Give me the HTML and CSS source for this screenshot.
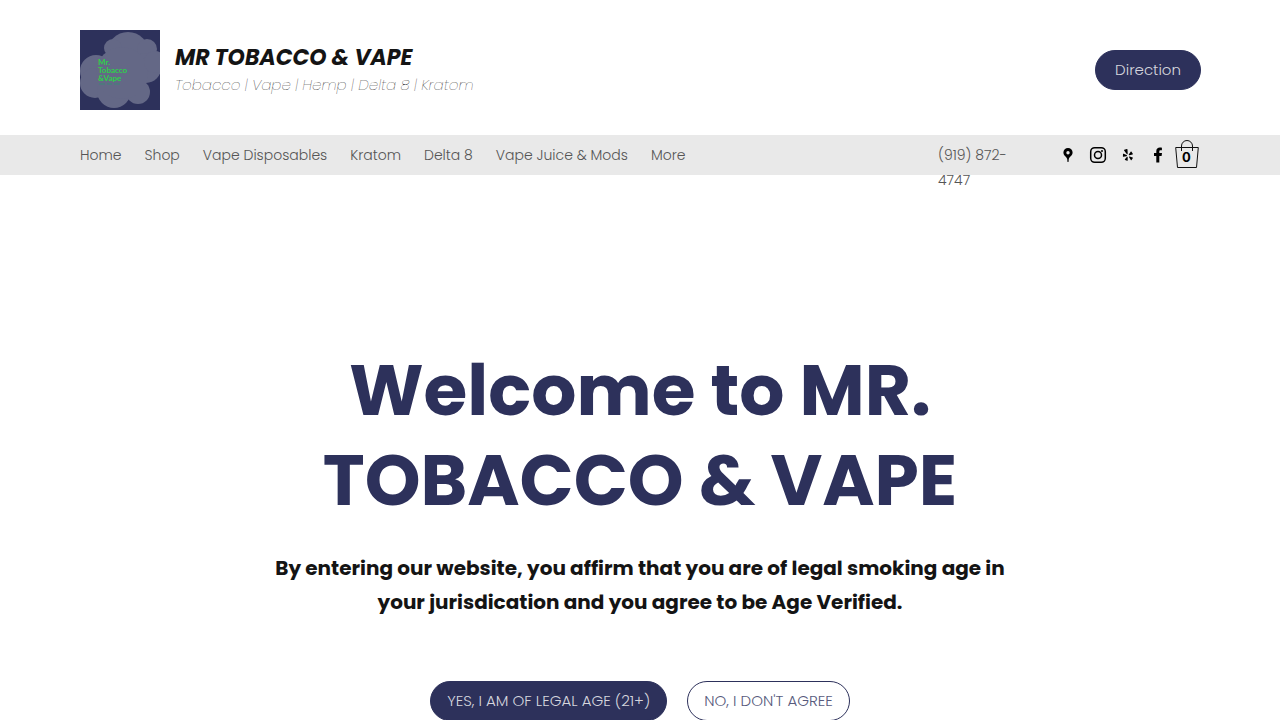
FILE: index.html
```html
<!DOCTYPE html>
<html lang="en">
<head>
<meta charset="utf-8">
<meta name="viewport" content="width=device-width, initial-scale=1">
<title>MR TOBACCO &amp; VAPE</title>
<link rel="stylesheet" href="styles.css">
</head>
<body>
<header class="header">
  <a class="logo" href="#" aria-label="Mr. Tobacco &amp; Vape home">
    <svg width="80" height="80" viewBox="0 0 80 80">
      <rect width="80" height="80" fill="#2d315b"/>
      <g fill="#646886">
        <circle cx="48" cy="23" r="21"/>
        <circle cx="33" cy="18" r="9"/>
        <circle cx="67" cy="19" r="10"/>
        <circle cx="16" cy="41" r="16"/>
        <circle cx="15" cy="53" r="15"/>
        <circle cx="34" cy="61" r="17"/>
        <circle cx="58" cy="62" r="12"/>
        <circle cx="66" cy="38" r="15"/>
        <circle cx="42" cy="43" r="26"/>
        <circle cx="75" cy="32" r="11"/>
      </g>
      <g class="logo-text">
        <text x="18" y="35">Mr.</text>
        <text x="18" y="43">Tobacco</text>
        <text x="18" y="51">&amp;Vape</text>
      </g>
      <path d="M19 54h6M27 54h5M34 54h6" stroke="#3d8576" stroke-width="1"/>
    </svg>
  </a>
  <div class="brand">
    <a class="brand-name" href="#">MR TOBACCO &amp; VAPE</a>
    <p class="tagline">Tobacco | Vape | Hemp | Delta 8 | Kratom</p>
  </div>
  <button class="button button-solid" type="button">Direction</button>
</header>
<div class="bar">
  <nav class="menu" aria-label="Site">
    <a href="#">Home</a>
    <a href="#">Shop</a>
    <a href="#">Vape Disposables</a>
    <a href="#">Kratom</a>
    <a href="#">Delta 8</a>
    <a href="#">Vape Juice &amp; Mods</a>
    <a href="#">More</a>
  </nav>
  <a class="phone" href="tel:9198724747">(919) 872-4747</a>
  <div class="social">
    <a href="#" aria-label="Google Places">
      <svg width="20" height="20" viewBox="0 0 20 20"><path fill-rule="evenodd" d="M10 3a4.600 4.600 0 0 0-4.600 4.600c0 2.900 2.900 4 3.800 6.400L9.500 17h1l.3-3c.9-2.400 3.800-3.500 3.800-6.400A4.600 4.600 0 0 0 10 3zm0 3a1.700 1.700 0 1 1 0 3.400A1.700 1.700 0 0 1 10 6z"/></svg>
    </a>
    <a href="#" aria-label="Instagram">
      <svg width="20" height="20" viewBox="0 0 20 20" fill="none" stroke="#000" stroke-width="1.500"><rect x="2.700" y="2.700" width="14.600" height="14.600" rx="4"/><circle cx="10" cy="10" r="3.500"/><circle cx="14" cy="6" r="1" fill="#000" stroke="none"/></svg>
    </a>
    <a href="#" aria-label="Yelp">
      <svg width="20" height="20" viewBox="0 0 20 20"><path d="M6.300 4.800 8.800 4c.4-.1.700.1.700.5l.2 4.200c0 .7-.7.900-1 .3L6.100 5.500c-.2-.3-.1-.6.2-.7zM5.600 8.800l3 1.300c.6.300.5 1-.1 1.100l-3 .6c-.3.100-.6-.1-.6-.4l.1-2.300c0-.3.300-.4.600-.3zM9.700 12.200v3.200c0 .3-.3.500-.6.400l-2-.8c-.4-.1-.4-.5-.2-.8l1.900-2.300c.4-.4.900-.2.900.3zM11.700 11.500l2.900.9c.3.100.4.400.3.700l-1.300 1.800c-.2.300-.6.300-.8 0l-1.700-2.600c-.3-.5.100-1 .6-.8zM10.900 9.300l1.800-2.500c.2-.3.500-.3.800 0l1.300 1.900c.1.300 0 .6-.3.700l-3 .8c-.6.100-1-.4-.6-.9z"/></svg>
    </a>
    <a href="#" aria-label="Facebook">
      <svg width="20" height="20" viewBox="0 0 20 20"><path d="M8.300 17.500v-6.600H6V8.100h2.300V6.300c0-2.400 1.400-3.700 3.600-3.700.9 0 1.700.1 2 .1v2.600h-1.200c-1.100 0-1.400.5-1.400 1.300v1.500h2.700l-.4 2.800h-2.300v6.600z"/></svg>
    </a>
  </div>
  <button class="cart" type="button" aria-label="Cart with 0 items">
    <svg width="24" height="30" viewBox="0 0 24 30"><g fill="none" stroke="#111" stroke-width="1"><path d="M.7 7.500h22.600L21.500 27.500h-19zM6.500 11V6a5.500 5.500 0 0 1 11 0v5"/></g><text class="cart-count" x="11.500" y="22" text-anchor="middle">0</text></svg>
  </button>
</div>
<main class="hero">
  <h1 class="title">Welcome to MR. TOBACCO &amp; VAPE</h1>
  <p class="notice">By entering our website, you affirm that you are of legal smoking age in your jurisdication and you agree to be Age Verified.</p>
  <div class="choices">
    <button class="button button-solid" type="button">YES, I AM OF LEGAL AGE (21+)</button>
    <button class="button button-outline" type="button">NO, I DON'T AGREE</button>
  </div>
</main>
</body>
</html>
```
FILE: styles.css
```css
* {
  box-sizing: border-box;
}

body {
  margin: 0;
  background: #fff;
  color: #141414;
  font-family: Poppins, Inter, "Liberation Sans", sans-serif;
}

a {
  color: inherit;
  text-decoration: none;
}

svg {
  display: block;
}

.header {
  display: flex;
  align-items: center;
  gap: 15px;
  padding: 30px 79px 25px 80px;
}

.logo-text {
  fill: #2ed04a;
  font-family: Lato, sans-serif;
  font-size: 8px;
  font-weight: 700;
}

.brand {
  flex: 1;
}

.brand-name {
  font-size: 22px;
  font-style: italic;
  font-weight: 700;
  line-height: 30px;
}

.tagline {
  margin: 0;
  color: #000;
  font-size: 15px;
  font-style: italic;
  font-weight: 200;
  line-height: 24px;
}

.button {
  height: 40px;
  padding: 0 19px 2px;
  border: 1px solid #2d315b;
  border-radius: 20px;
  font-family: inherit;
  font-size: 15px;
  font-weight: 300;
  white-space: nowrap;
}

.button-solid {
  background: #2d315b;
  color: #d5d6de;
}

.button-outline {
  background: #fff;
  color: #575a7c;
}

.bar {
  display: flex;
  align-items: flex-start;
  height: 40px;
  padding: 0 81px 0 80px;
  background: #e9e9e9;
}

.menu {
  display: flex;
  flex: 1;
  gap: 23px;
  color: #555;
  font-size: 14px;
  font-weight: 300;
  line-height: 40px;
  white-space: nowrap;
}

.phone {
  width: 85px;
  margin-right: 35px;
  padding-top: 8px;
  color: #555;
  font-size: 14px;
  font-weight: 300;
  line-height: 25px;
}

.social {
  display: flex;
  gap: 10px;
  padding: 10px 7px 0 0;
}

.cart {
  padding: 5px 0 0;
  border: 0;
  background: none;
}

.cart-count {
  font-family: Inter, sans-serif;
  font-size: 13px;
  font-weight: 700;
}

.hero {
  display: flex;
  flex-direction: column;
  align-items: center;
  padding: 170px 20px 0;
  text-align: center;
}

.title {
  max-width: 760px;
  margin: 0;
  color: #2d315b;
  font-size: 71px;
  font-weight: 700;
  line-height: 90px;
}

.notice {
  max-width: 760px;
  margin: 26px 0 62px;
  font-size: 20px;
  font-weight: 700;
  line-height: 34px;
}

.choices {
  display: flex;
  gap: 20px;
}

.choices .button {
  padding: 0 16px 2px;
}
```
